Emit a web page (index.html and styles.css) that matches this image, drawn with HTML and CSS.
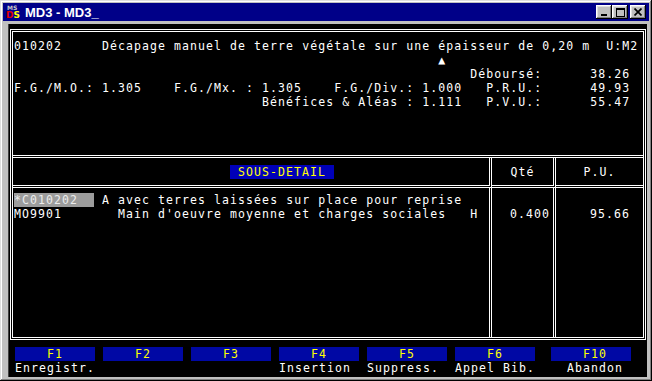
FILE: index.html
```html
<!DOCTYPE html>
<html lang="fr">
<head>
    <meta charset="UTF-8">
    <title>MD3 - MD3_</title>
    <link rel="stylesheet" href="styles.css">
</head>
<body>
    <div class="window">
        <div class="titlebar">
            <svg class="app-icon" width="16" height="16" viewBox="0 0 16 16">
                <text x="1" y="6" class="ico-ms">MS</text>
                <text x="0" y="14" class="ico-dos"><tspan class="ico-d">D</tspan><tspan class="ico-s">S</tspan></text>
            </svg>
            <span class="title">MD3 - MD3_</span>
            <div class="controls">
                <button class="ctl">
                    <svg width="8" height="8" viewBox="0 0 8 8"><rect x="1" y="6" width="6" height="2" fill="#000"/></svg>
                </button>
                <button class="ctl">
                    <svg width="9" height="9" viewBox="0 0 9 9"><rect x="0.5" y="0.5" width="8" height="8" fill="none" stroke="#000"/><rect x="0" y="1" width="9" height="1" fill="#000"/></svg>
                </button>
                <button class="ctl ctl-close">
                    <svg width="8" height="8" viewBox="0 0 8 8"><path d="M0.5 0.5L7.5 7.5M7.5 0.5L0.5 7.5" stroke="#000" stroke-width="1.7"/></svg>
                </button>
            </div>
        </div>

        <div class="console">
            <div class="frame">
                <!-- article header -->
                <div class="head">
                    <div class="line">010202     Décapage manuel de terre végétale sur une épaisseur de 0,20 m  U:M2</div>
                    <div class="line">                                                     ▲</div>
                    <div class="line">                                                         Déboursé:      38.26</div>
                    <div class="line">F.G./M.O.: 1.305    F.G./Mx. : 1.305    F.G./Div.: 1.000   P.R.U.:      49.93</div>
                    <div class="line">                               Bénéfices &amp; Aléas : 1.111   P.V.U.:      55.47</div>
                </div>

                <!-- sous-detail table -->
                <div class="detail">
                    <div class="th col-desc"><span class="banner"> SOUS-DETAIL </span></div>
                    <div class="th col-qty">Qté</div>
                    <div class="th col-pu">P.U.</div>

                    <div class="td col-desc">
                        <div class="line"><span class="sel">*C010202  </span> A avec terres laissées sur place pour reprise</div>
                        <div class="line">MO9901       Main d'oeuvre moyenne et charges sociales   H</div>
                    </div>
                    <div class="td col-qty">
                        <div class="line"></div>
                        <div class="line">0.400</div>
                    </div>
                    <div class="td col-pu">
                        <div class="line"></div>
                        <div class="line">95.66</div>
                    </div>
                </div>
            </div>

            <!-- function keys -->
            <div class="fkeys">
                <div class="fkey"><div class="key">F1</div><div class="label">Enregistr.</div></div>
                <div class="fkey"><div class="key">F2</div><div class="label"></div></div>
                <div class="fkey"><div class="key">F3</div><div class="label"></div></div>
                <div class="fkey"><div class="key">F4</div><div class="label">Insertion</div></div>
                <div class="fkey"><div class="key">F5</div><div class="label">Suppress.</div></div>
                <div class="fkey"><div class="key">F6</div><div class="label">Appel Bib.</div></div>
                <div class="fkey fkey-last"><div class="key">F10</div><div class="label">  Abandon</div></div>
            </div>
        </div>
    </div>
</body>
</html>
```

FILE: styles.css
```css
* {
    box-sizing: border-box;
}

body {
    margin: 0;
    background-color: #c0c0c0;
    font-family: "DejaVu Sans Mono", monospace;
}

/* Window chrome */
.window {
    width: 652px;
    height: 381px;
    padding: 3px;
    background-color: #c0c0c0;
    box-shadow: inset -1px -1px #000, inset 1px 1px #dfdfdf,
                inset -2px -2px #808080, inset 2px 2px #fff;
    display: flex;
    flex-direction: column;
}

.titlebar {
    height: 18px;
    flex-shrink: 0;
    background-color: #000088;
    display: flex;
    align-items: center;
    gap: 3px;
    padding: 0 3px 0 3px;
}

.app-icon {
    flex-shrink: 0;
}

.app-icon text {
    font-family: "DejaVu Sans", sans-serif;
    font-weight: bold;
}

.ico-ms {
    font-size: 6px;
    fill: #c8c8c8;
}

.ico-dos {
    font-size: 9px;
}

.ico-d {
    fill: #e00000;
}

.ico-s {
    fill: #ffff00;
}

.title {
    color: #fff;
    font-family: "Liberation Sans", sans-serif;
    font-weight: bold;
    font-size: 13px;
}

.controls {
    margin-left: auto;
    display: flex;
}

.ctl {
    width: 16px;
    height: 14px;
    padding: 0;
    border: none;
    background-color: #c0c0c0;
    box-shadow: inset -1px -1px #000, inset 1px 1px #fff,
                inset -2px -2px #808080, inset 2px 2px #dfdfdf;
    display: flex;
    align-items: center;
    justify-content: center;
}

.ctl-close {
    margin-left: 2px;
}

/* Console area */
.console {
    flex: 1;
    margin: 3px 2px 1px 5px;
    background-color: #000;
    border-left: 1px solid #404040;
    padding: 5px 0 0 1px;
    color: #fff;
    font-size: 11.5px;
    letter-spacing: 1.08px;
}

.line {
    height: 14px;
    line-height: 14px;
    white-space: pre;
}

.frame {
    width: 636px;
    height: 311px;
    border: 3px double #fff;
    display: flex;
    flex-direction: column;
}

.head {
    height: 123px;
    flex-shrink: 0;
    padding: 7px 0 0 1px;
}

.detail {
    flex: 1;
    border-top: 3px double #fff;
    display: grid;
    grid-template-columns: 479px 64px 1fr;
    grid-template-rows: 30px 1fr;
}

.col-desc,
.col-qty {
    border-right: 3px double #fff;
}

.th {
    border-bottom: 3px double #fff;
    display: flex;
    align-items: center;
    justify-content: center;
    line-height: 14px;
}

.th.col-desc {
    justify-content: flex-start;
    padding-left: 217px;
}

.banner {
    background-color: #0000b8;
    color: #ffff00;
    white-space: pre;
}

.td {
    padding-top: 5px;
}

.td.col-desc {
    padding-left: 1px;
}

.td.col-qty {
    text-align: right;
    padding-right: 3px;
}

.td.col-pu {
    text-align: right;
    padding-right: 13px;
}

.sel {
    display: inline-block;
    background-color: #9c9c9c;
    color: #ececec;
}

/* Function keys */
.fkeys {
    display: flex;
    gap: 8px;
    margin-top: 7px;
    padding-left: 5px;
}

.fkey {
    width: 80px;
}

.fkey-last {
    margin-left: 8px;
}

.key {
    height: 14px;
    line-height: 14px;
    padding-left: 32px;
    background-color: #0008a4;
    color: #ffff00;
}

.label {
    height: 14px;
    line-height: 14px;
    white-space: pre;
}
```
